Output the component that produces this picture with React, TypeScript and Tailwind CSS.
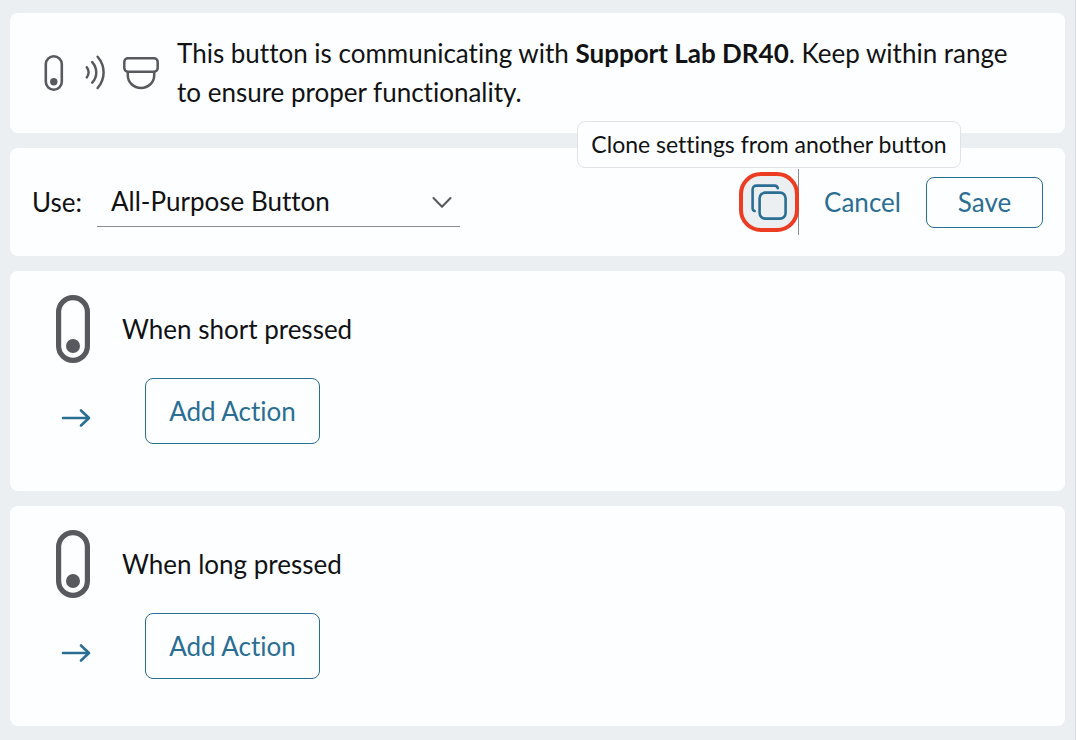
import { useState } from "react";

function RemoteIcon() {
  return (
    <svg className="h-[68px] w-[34px] shrink-0 text-[#58595e]" viewBox="0 0 34 68" fill="none" aria-hidden="true">
      <rect x="2.6" y="2.6" width="28.8" height="62.8" rx="14.4" stroke="currentColor" strokeWidth="5.2" />
      <circle cx="17" cy="51" r="7" fill="currentColor" />
    </svg>
  );
}

function SmallRemoteIcon() {
  return (
    <svg className="h-9 w-5 shrink-0" viewBox="0 0 20 36" fill="none" aria-hidden="true">
      <rect x="1.8" y="1.3" width="16" height="33.4" rx="8" stroke="currentColor" strokeWidth="2.6" />
      <circle cx="9.8" cy="26.8" r="3.7" fill="currentColor" />
    </svg>
  );
}

function WavesIcon() {
  return (
    <svg
      className="h-9 w-5 shrink-0"
      viewBox="0 0 20 36"
      fill="none"
      stroke="currentColor"
      strokeWidth="2.5"
      strokeLinecap="round"
      aria-hidden="true"
    >
      <path d="M1.800 12.300c2.400 2.700 2.400 7.400 0 10.100" />
      <path d="M7.200 7.200c5.400 5.900 5.400 14.600 0 20.500" />
      <path d="M12.600 1.800c8 9.400 8 21.800 0 31.200" />
    </svg>
  );
}

function CameraIcon() {
  return (
    <svg
      className="h-9 w-9 shrink-0"
      viewBox="0 0 36 36"
      fill="none"
      stroke="currentColor"
      strokeWidth="2.5"
      aria-hidden="true"
    >
      <rect x="1.300" y="3.300" width="33.400" height="13.400" rx="3.600" />
      <path d="M4.800 17v3.200a13.200 12.800 0 0 0 26.400 0V17" />
    </svg>
  );
}

function CloneIcon() {
  return (
    <svg
      className="h-9 w-9"
      viewBox="0 0 36 36"
      fill="none"
      stroke="currentColor"
      strokeWidth="2.600"
      strokeLinecap="round"
      strokeLinejoin="round"
      aria-hidden="true"
    >
      <rect x="8.600" y="8.600" width="26" height="26" rx="5.600" />
      <path d="M3.600 27c-1.300-.4-2-1.400-2-3V5.600c0-2.500 1.500-4 4-4h18.200c1.600 0 2.600.8 3 2.600" />
    </svg>
  );
}

function ArrowIcon() {
  return (
    <svg
      className="h-5 w-[30px] shrink-0"
      viewBox="0 0 30 20"
      fill="none"
      stroke="currentColor"
      strokeWidth="2.600"
      strokeLinecap="round"
      strokeLinejoin="round"
      aria-hidden="true"
    >
      <path d="M2 10H28M20 2.500 28 10l-8 7.500" />
    </svg>
  );
}

function ActionCard({ title }: { title: string }) {
  return (
    <section className="min-h-[220px] rounded-lg bg-[#fdfeff] px-[46px] pt-6">
      <div className="flex items-center gap-8">
        <RemoteIcon />
        <h2>{title}</h2>
      </div>
      <div className="mt-[15px] flex items-end pl-[5px] text-[#2a6e94]">
        <div className="flex h-[52px] w-[84px] items-center">
          <ArrowIcon />
        </div>
        <button type="button" className="h-[66px] w-[175px] rounded-lg border border-[#2a6e94]">
          Add Action
        </button>
      </div>
    </section>
  );
}

export default function App() {
  const [mode, setMode] = useState("all-purpose");

  return (
    <main className="flex min-h-screen flex-col gap-[15px] border-r border-[#d9dde2] bg-[#ebeff2] px-2.5 pt-[13px] pb-3.5 font-['Lato','Open_Sans',sans-serif] text-[26px] leading-[39px] text-[#111214] [font-variant-ligatures:none]">
      <section className="flex min-h-[120px] items-center rounded-lg bg-[#fdfeff] pr-10 pl-[34px]">
        <div className="flex items-center text-[#58595e]">
          <SmallRemoteIcon />
          <div className="pr-[18px] pl-[21px]">
            <WavesIcon />
          </div>
          <CameraIcon />
        </div>
        <p className="ml-[18px]">
          <span>This button is communicating with </span>
          <strong className="font-bold">Support Lab DR40</strong>
          <span>. Keep within range </span>
          <span>to ensure proper functionality.</span>
        </p>
      </section>

      <section className="flex min-h-[108px] items-center justify-between rounded-lg bg-[#fdfeff] px-[22px]">
        <div className="flex items-center">
          <label htmlFor="mode" className="w-[65px]">
            Use:
          </label>
          <div className="grid w-[363px] items-center">
            <select
              id="mode"
              value={mode}
              onChange={(event) => setMode(event.target.value)}
              className="col-start-1 row-start-1 h-[50px] w-full appearance-none border-b border-[#8b8c91] bg-transparent pr-10 pl-3.5"
            >
              <option value="all-purpose">All-Purpose Button</option>
            </select>
            <svg
              className="pointer-events-none col-start-1 row-start-1 mr-2 h-3 w-5 justify-self-end"
              viewBox="0 0 20 12"
              fill="none"
              stroke="#58595e"
              strokeWidth="2"
              strokeLinecap="round"
              strokeLinejoin="round"
              aria-hidden="true"
            >
              <path d="M1.500 2 10 10.800l8.500-8.800" />
            </svg>
          </div>
        </div>

        <div className="flex items-center text-[#2a6e94]">
          <div className="relative z-10">
            <button
              type="button"
              aria-describedby="clone-tip"
              aria-label="Clone settings"
              className="flex size-[60px] items-center justify-center rounded-[22px] border-4 border-[#ec3d23] bg-[#ebeff2]"
            >
              <CloneIcon />
            </button>
            <div
              id="clone-tip"
              role="tooltip"
              className="absolute bottom-full left-1/2 mb-1 flex h-[47px] w-[384px] -translate-x-1/2 items-center justify-center rounded-lg border border-[#dfe2e7] bg-[#fdfeff] text-[23px] whitespace-nowrap text-[#111214]"
            >
              Clone settings from another button
            </div>
          </div>
          <div className="-ml-px h-[66px] w-px bg-[#8b8c91]" />
          <button type="button" className="w-[127px] text-center">
            Cancel
          </button>
          <button type="button" className="h-[51px] w-[117px] rounded-lg border border-[#2a6e94]">
            Save
          </button>
        </div>
      </section>

      <ActionCard title="When short pressed" />
      <ActionCard title="When long pressed" />
    </main>
  );
}
